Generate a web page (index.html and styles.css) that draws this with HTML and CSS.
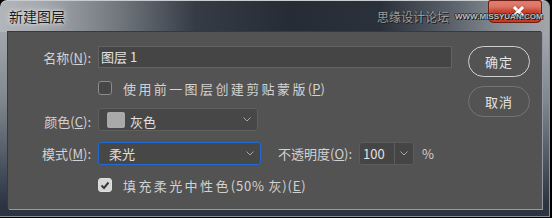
FILE: index.html
```html
<!DOCTYPE html>
<html lang="zh-CN">
<head>
<meta charset="utf-8">
<title>新建图层</title>
<link rel="stylesheet" href="styles.css">
</head>
<body>
<div class="window">
  <div class="titlebar">
    <span class="title">新建图层</span>
    <span class="tb-btn"><span class="xa"></span><span class="xb"></span></span>
  </div>
  <div class="watermark"><span class="wm-cn">思缘设计论坛</span><span class="wm-en">WWW.MISSYUAN.COM</span></div>
  <div class="panel">
    <div class="form">
      <div class="row r1">
        <span class="lbl">名称(<u>N</u>):</span>
        <div class="field name">图层 1</div>
      </div>
      <div class="row r2 check-row">
        <span class="cb"></span>
        <span class="cbtext"><span class="wide">使用前一图层创建剪贴蒙版</span>(<u>P</u>)</span>
      </div>
      <div class="row r3">
        <span class="lbl">颜色(<u>C</u>):</span>
        <div class="select color">
          <span class="swatch"></span>
          <span class="sel-text">灰色</span>
          <svg class="chev" width="8" height="5" viewBox="0 0 8 5"><path d="M0.5 0.5 L4 4 L7.5 0.5" fill="none" stroke="#a6a6a6" stroke-width="1"/></svg>
        </div>
      </div>
      <div class="row r4">
        <span class="lbl">模式(<u>M</u>):</span>
        <div class="select mode">
          <span class="sel-text">柔光</span>
          <svg class="chev" width="8" height="5" viewBox="0 0 8 5"><path d="M0.5 0.5 L4 4 L7.5 0.5" fill="none" stroke="#a6a6a6" stroke-width="1"/></svg>
        </div>
        <span class="lbl2">不透明度(<u>O</u>):</span>
        <div class="opacity">
          <span class="op-val">100</span>
          <span class="op-arrow"><svg width="8" height="5" viewBox="0 0 8 5"><path d="M0.5 0.5 L4 4 L7.5 0.5" fill="none" stroke="#a6a6a6" stroke-width="1"/></svg></span>
        </div>
        <span class="pct">%</span>
      </div>
      <div class="row r5 check-row">
        <span class="cb checked"><svg width="10" height="9" viewBox="0 0 10 9"><path d="M1.5 4.5 L4 7 L8.5 1.5" fill="none" stroke="#3a3a3a" stroke-width="2"/></svg></span>
        <span class="cbtext"><span class="wide">填充柔光中性色</span><span class="mid">(50% 灰)(<u>E</u>)</span></span>
      </div>
    </div>
    <div class="buttons">
      <div class="btn primary">确定</div>
      <div class="btn">取消</div>
    </div>
  </div>
</div>
</body>
</html>
```
FILE: styles.css
```css
html, body {
  margin: 0;
  padding: 0;
  background: #000;
}
body {
  width: 552px;
  height: 218px;
  font-family: "Noto Sans CJK SC", "Noto Sans", sans-serif;
}
.window {
  width: 550px;
  height: 217px;
  border-radius: 7px 7px 0 0;
  display: flex;
  flex-direction: column;
  position: relative;
  background:
    linear-gradient(90deg, #b2b6ba 0, #a4a8ad 45px, #6c7279 125px, #353c46 195px, #252c36 290px, #2a313b 380px, #596069 450px, #8a9096 505px, #a2a7ac 550px) top left / 100% 32px no-repeat,
    linear-gradient(180deg, #a2a7ac 32px, #80878e 100px, #46505c 170px, #2b3440 205px);
  box-shadow: inset 0 -1px 0 #8a9096, inset -1px 0 0 #8a9096, inset 0 1px 0 #c8ccd0;
}
.titlebar {
  height: 32px;
  flex: 0 0 32px;
  display: flex;
  align-items: flex-start;
}
.title {
  margin: 6px 0 0 9px;
  font-size: 14px;
  line-height: 20px;
  color: #1c1c1c;
  text-shadow: 0 0 3px #e6eaee, 0 0 7px rgba(255,255,255,0.7);
}
.tb-btn {
  width: 54px;
  height: 23px;
  margin-left: auto;
  margin-right: 8px;
  background: #c43c28;
  border-radius: 3px 3px 6px 6px;
  box-shadow: inset 0 0 0 1px #6a2014, inset 0 9px 4px rgba(255,200,190,0.45);
  display: grid;
  place-items: center;
}
.xa, .xb {
  grid-area: 1 / 1;
  width: 13px;
  height: 3px;
  background: #ffffff;
  box-shadow: 0 0 2px rgba(90,20,10,0.6);
  margin-left: 6px;
  transform: rotate(45deg);
}
.xb {
  transform: rotate(-45deg);
}
.watermark {
  position: absolute;
  left: 377px;
  top: 7px;
  display: flex;
  align-items: center;
  gap: 6px;
  height: 18px;
  white-space: nowrap;
}
.wm-cn {
  font-size: 12px;
  color: #9a9a9a;
  text-shadow: 1px 1px 0 #202020, -1px 0 0 #303030;
}
.wm-en {
  font-family: "Liberation Sans", Arial, sans-serif;
  font-size: 8px;
  font-weight: bold;
  color: #bcbcbc;
  text-shadow: 1px 1px 0 #1a1a1a, -1px 0 0 #2a2a2a, 0 -1px 0 #2a2a2a;
}
.panel {
  margin: 0 8px 8px 8px;
  flex: 1;
  background: #535353;
  box-shadow: -1px -1px 0 #36393e, 1px 1px 0 #959aa0;
  display: flex;
  padding-top: 14px;
  box-sizing: border-box;
}
.form {
  flex: 1;
  display: flex;
  flex-direction: column;
}
.row {
  display: flex;
  align-items: center;
  font-size: 13px;
  color: #d2d2d2;
}
.lbl {
  width: 83px;
  text-align: right;
  margin-right: 7px;
  white-space: nowrap;
}
u {
  text-decoration: underline;
  text-underline-offset: 1px;
}
.r1 { height: 22px; }
.r2 { height: 14px; margin-top: 13px; }
.r3 { height: 23px; margin-top: 13px; }
.r4 { height: 23px; margin-top: 11px; }
.r5 { height: 14px; margin-top: 13px; }
.r3 .lbl { padding-top: 3px; }
.field {
  box-sizing: border-box;
  height: 22px;
  background: #454545;
  border: 1px solid #636363;
  color: #e2e2e2;
  padding-left: 2px;
  line-height: 20px;
}
.name { width: 354px; }
.check-row { padding-left: 90px; }
.cb {
  width: 14px;
  height: 14px;
  box-sizing: border-box;
  border: 1px solid #8c8c8c;
  border-radius: 3px;
  background: #474747;
  margin-right: 11px;
  display: flex;
  align-items: center;
  justify-content: center;
}
.cb.checked {
  background: #d6d6d6;
  border-color: #e0e0e0;
}
.cbtext {
  white-space: nowrap;
}
.wide {
  letter-spacing: 2.4px;
}
.mid {
  letter-spacing: 0.8px;
}
.select {
  box-sizing: border-box;
  height: 23px;
  background: #474747;
  border: 1px solid #5f5f5f;
  border-radius: 3px;
  display: flex;
  align-items: center;
  color: #e0e0e0;
}
.color {
  width: 160px;
  padding: 0 6px 0 8px;
}
.swatch {
  width: 18px;
  height: 16px;
  background: #a9a9a9;
  border-radius: 2px;
  margin-right: 5px;
}
.color .sel-text { padding-top: 3px; }
.mode {
  width: 163px;
  border: 1.5px solid #1f6ad4;
  padding: 0 6px 0 10px;
}
.chev { margin-left: auto; }
.lbl2 {
  margin-left: 17px;
  margin-right: 7px;
  white-space: nowrap;
}
.opacity {
  box-sizing: border-box;
  width: 55px;
  height: 23px;
  background: #454545;
  border: 1px solid #5c5c5c;
  border-radius: 3px;
  display: flex;
  color: #e2e2e2;
}
.op-val {
  width: 35px;
  padding-left: 3px;
  box-sizing: border-box;
  border-right: 1px solid #5c5c5c;
  line-height: 21px;
}
.op-arrow {
  flex: 1;
  display: flex;
  align-items: center;
  justify-content: center;
}
.pct {
  margin-left: 8px;
  color: #d2d2d2;
}
.buttons {
  width: 62px;
  margin-right: 12px;
  display: flex;
  flex-direction: column;
  gap: 9px;
}
.btn {
  height: 31px;
  box-sizing: border-box;
  border: 1px solid #747474;
  border-radius: 16px;
  display: flex;
  align-items: center;
  justify-content: center;
  font-size: 13px;
  color: #e4e4e4;
  letter-spacing: 1px;
}
.btn.primary {
  border: 1.5px solid #cfcfcf;
}
```
